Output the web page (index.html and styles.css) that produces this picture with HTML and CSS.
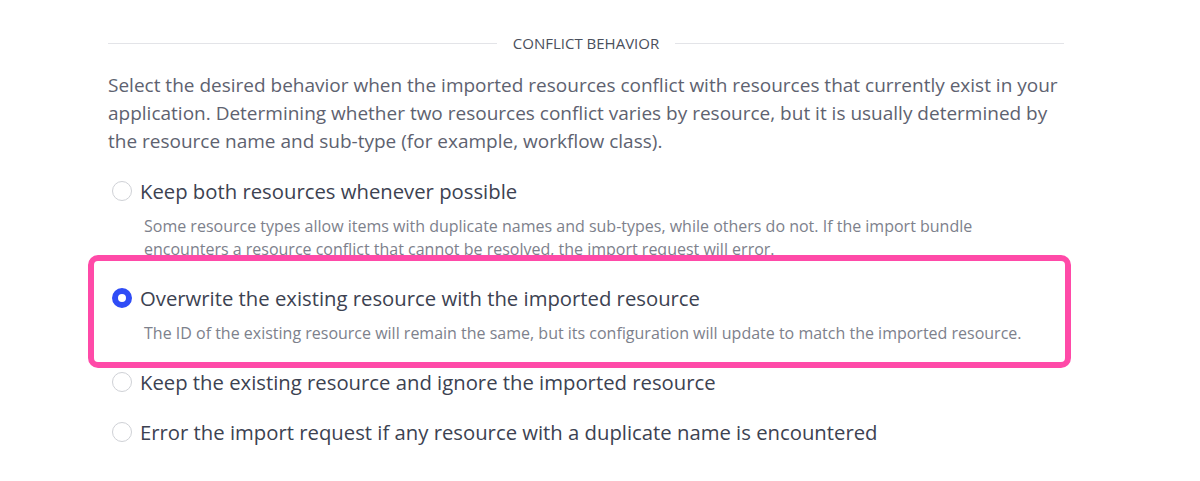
FILE: index.html
```html
<!DOCTYPE html>
<html lang="en">
<head>
    <meta charset="UTF-8">
    <title>Conflict Behavior</title>
    <link rel="stylesheet" href="styles.css">
</head>
<body>

    <section class="conflict">
        <div class="section-title">
            <span>Conflict Behavior</span>
        </div>

        <p class="intro">Select the desired behavior when the imported resources conflict with resources that currently exist in your application. Determining whether two resources conflict varies by resource, but it is usually determined by the resource name and sub-type (for example, workflow class).</p>

        <div class="options">
            <label class="option">
                <span class="radio"></span>
                <span class="option-body">
                    <span class="option-label">Keep both resources whenever possible</span>
                    <span class="option-desc">Some resource types allow items with duplicate names and sub-types, while others do not. If the import bundle encounters a resource conflict that cannot be resolved, the import request will error.</span>
                </span>
            </label>

            <label class="option selected">
                <span class="radio"></span>
                <span class="option-body">
                    <span class="option-label">Overwrite the existing resource with the imported resource</span>
                    <span class="option-desc">The ID of the existing resource will remain the same, but its configuration will update to match the imported resource.</span>
                </span>
            </label>

            <label class="option">
                <span class="radio"></span>
                <span class="option-body">
                    <span class="option-label">Keep the existing resource and ignore the imported resource</span>
                </span>
            </label>

            <label class="option">
                <span class="radio"></span>
                <span class="option-body">
                    <span class="option-label">Error the import request if any resource with a duplicate name is encountered</span>
                </span>
            </label>
        </div>
    </section>

</body>
</html>
```

FILE: styles.css
```css
/* General */
body {
    margin: 0;
    background: #fff;
    font-family: 'Open Sans', sans-serif;
}

.conflict {
    width: 956px;
    padding: 33px 0 0 108px;
}

/* Section title with rules */
.section-title {
    display: flex;
    align-items: center;
    gap: 16px;
    height: 20px;
    font-size: 15px;
    color: #4a4f5c;
    text-transform: uppercase;
}

.section-title::before,
.section-title::after {
    content: "";
    flex: 1;
    height: 1px;
    background: #e3e4e8;
}

/* Intro text */
.intro {
    margin: 18px 0 0;
    font-size: 19px;
    line-height: 28px;
    color: #5e6270;
}

/* Options */
.options {
    display: flex;
    flex-direction: column;
    gap: 24px;
    margin-top: 23px;
}

.option {
    position: relative;
    display: flex;
    align-items: flex-start;
    gap: 8px;
    padding-left: 4px;
}

.radio {
    flex: none;
    box-sizing: border-box;
    width: 20px;
    height: 20px;
    margin-top: 3px;
    border: 1px solid #cfd1d6;
    border-radius: 50%;
    background: #fff;
}

.selected .radio {
    border: 6px solid #2f4cf6;
}

.option-body {
    display: flex;
    flex-direction: column;
    gap: 11px;
}

.option-label {
    font-size: 20.3px;
    line-height: 26px;
    color: #3c4251;
}

.option-desc {
    padding: 0 24px 0 4px;
    font-size: 16px;
    line-height: 23px;
    color: #7d818c;
}

/* Pink highlight */
.selected::after {
    content: "";
    position: absolute;
    top: -30px;
    bottom: -23px;
    left: -20px;
    right: -7px;
    border: 6px solid #ff4aa8;
    border-radius: 10px;
    pointer-events: none;
}
```
